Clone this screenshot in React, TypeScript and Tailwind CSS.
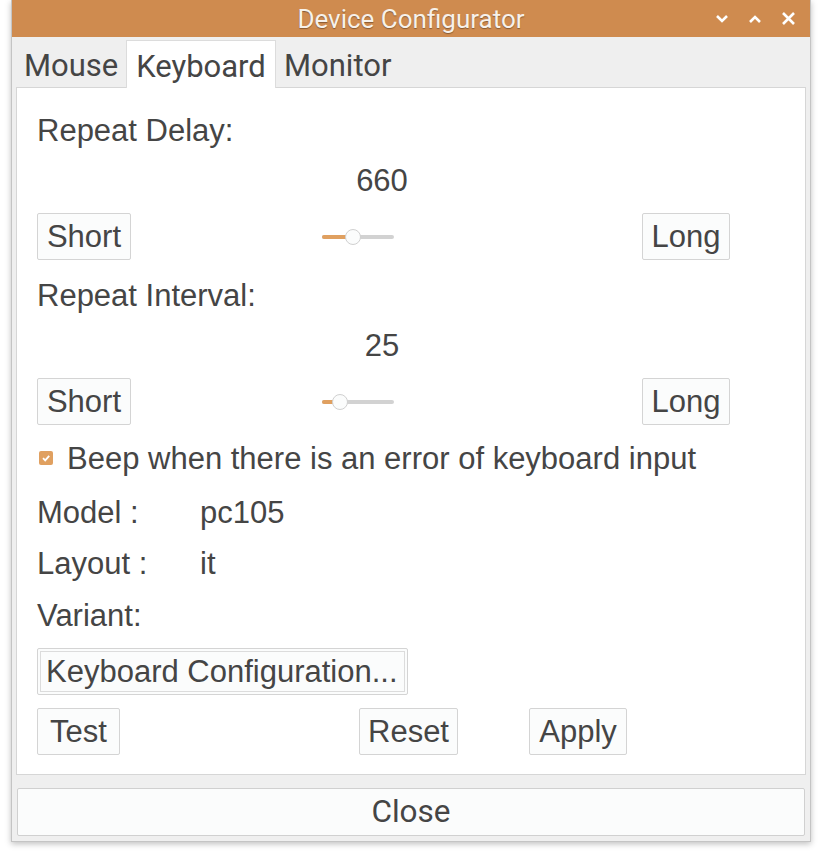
import React from "react";

const body = { fontFamily: '"Liberation Sans", Arial, sans-serif' };
const rob = { fontFamily: 'Roboto, "Liberation Sans", sans-serif' };

function Btn({ children, className = "" }: { children: React.ReactNode; className?: string }) {
  return (
    <div
      className={`h-[47px] flex items-center justify-center border border-[#d4d4d4] rounded-[2px] bg-[#fbfcfc] text-[31px] text-[#454545] leading-none ${className}`}
      style={body}
    >
      {children}
    </div>
  );
}

function Slider({ thumb }: { thumb: number }) {
  return (
    <div className="relative w-[72px] h-[20px]">
      <div className="absolute left-0 right-0 top-[8px] h-[4px] rounded-full bg-[#d2d2d2]" />
      <div className="absolute left-0 top-[8px] h-[4px] rounded-full bg-[#e0a060]" style={{ width: thumb }} />
      <div
        className="absolute top-[2px] w-[16px] h-[16px] rounded-full bg-[#fbfcfc] border border-[#d0d0d0]"
        style={{ left: thumb - 8 }}
      />
    </div>
  );
}

function SliderBlock({ label, value, thumb, mt }: { label: string; value: string; thumb: number; mt: string }) {
  return (
    <>
      <div className={`h-[40px] flex items-center ${mt}`}>{label}</div>
      <div className="h-[40px] mt-[10px] flex items-center">
        <div className="w-[690px] text-center">{value}</div>
      </div>
      <div className="h-[47px] mt-[13px] flex items-center">
        <Btn className="w-[94px]">Short</Btn>
        <div className="ml-[191px]">
          <Slider thumb={thumb} />
        </div>
        <Btn className="w-[88px] ml-[248px]">Long</Btn>
      </div>
    </>
  );
}

export default function App() {
  return (
    <div className="w-[821px] h-[851px] bg-white relative overflow-hidden">
      <div className="ml-[11px] w-[800px] h-[842px] bg-[#efefef] border-l border-r border-b border-[#c4c4c4] shadow-[0_2px_6px_rgba(0,0,0,0.25)] flex flex-col">
        {/* Title bar */}
        <div className="h-[37px] bg-[#cf8b4f] relative flex items-center justify-center">
          <span
            className="text-[26px] text-[#f7f1ea] leading-none [text-shadow:0_1px_1px_rgba(0,0,0,0.35)]"
            style={rob}
          >
            Device Configurator
          </span>
          <div className="absolute right-[14px] top-0 h-[37px] flex items-center gap-[19px]">
            <svg width="14" height="10" viewBox="0 0 14 10">
              <path d="M2 2 L7 7 L12 2" stroke="#fff" strokeWidth="2.6" fill="none" />
            </svg>
            <svg width="14" height="10" viewBox="0 0 14 10">
              <path d="M2 8 L7 3 L12 8" stroke="#fff" strokeWidth="2.6" fill="none" />
            </svg>
            <svg width="15" height="15" viewBox="0 0 15 15">
              <path d="M2 2 L13 13 M13 2 L2 13" stroke="#fff" strokeWidth="2.6" fill="none" />
            </svg>
          </div>
        </div>

        {/* Tabs */}
        <div className="h-[50px] pt-[3px] pl-[8px] flex items-end text-[31px] text-[#454545] leading-none" style={rob}>
          <div className="h-[47px] w-[106px] flex items-center pl-[4px] pt-[4px]">Mouse</div>
          <div className="h-[48px] w-[150px] -mb-[1px] flex items-center justify-center pt-[3px] bg-white border border-[#dcdcdc] border-b-0 relative z-10">
            Keyboard
          </div>
          <div className="h-[47px] w-[114px] flex items-center pl-[8px] pt-[4px]">Monitor</div>
        </div>

        {/* Panel */}
        <div
          className="mx-[4px] h-[688px] bg-white border border-[#d6d6d6] pl-[20px] flex flex-col text-[31px] text-[#454545] leading-none"
          style={body}
        >
          <SliderBlock label="Repeat Delay:" value="660" thumb={31} mt="mt-[22px]" />
          <SliderBlock label="Repeat Interval:" value="25" thumb={18} mt="mt-[15px]" />

          <div className="h-[40px] mt-[13px] flex items-center">
            <div className="ml-[2px] w-[14px] h-[14px] rounded-[2px] bg-[#e0a060] flex items-center justify-center">
              <svg width="10" height="10" viewBox="0 0 10 10">
                <path d="M2 5.2 L4.2 7.4 L8.2 2.8" stroke="#fff" strokeWidth="1.8" fill="none" />
              </svg>
            </div>
            <span className="ml-[14px]">Beep when there is an error of keyboard input</span>
          </div>

          <div className="h-[40px] mt-[14px] flex items-center">
            <span className="w-[163px]">Model :</span>
            <span>pc105</span>
          </div>
          <div className="h-[40px] mt-[11px] flex items-center">
            <span className="w-[163px]">Layout :</span>
            <span>it</span>
          </div>
          <div className="h-[40px] mt-[12px] flex items-center">Variant:</div>

          <div className="mt-[13px] w-[371px] h-[47px] border border-[#d4d4d4] rounded-[2px] p-[2px] bg-[#fbfcfc]">
            <div className="h-full border border-[#dcdcdc] flex items-center pl-[5px]">Keyboard Configuration...</div>
          </div>

          <div className="mt-[13px] h-[47px] flex items-center">
            <Btn className="w-[83px]">Test</Btn>
            <Btn className="w-[99px] ml-[239px]">Reset</Btn>
            <Btn className="w-[98px] ml-[71px]">Apply</Btn>
          </div>
        </div>

        {/* Close */}
        <div className="mt-[13px] mx-[5px] h-[48px] border border-[#d0d0d0] rounded-[2px] bg-[#fbfcfc] flex items-center justify-center text-[31.5px] text-[#454545] leading-none" style={rob}>
          Close
        </div>
      </div>
    </div>
  );
}
